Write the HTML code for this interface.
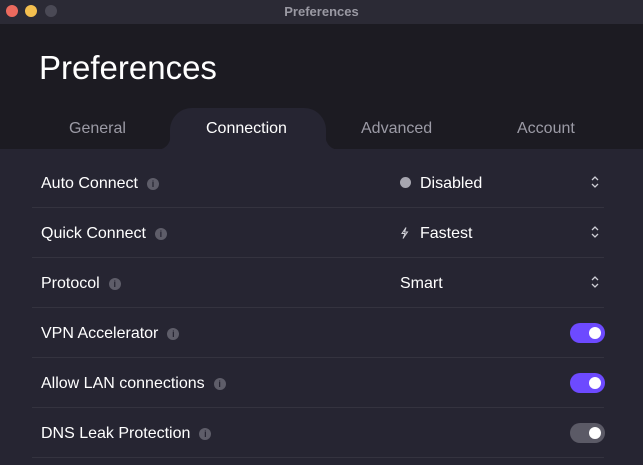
<!DOCTYPE html>
<html><head><style>
*{margin:0;padding:0;box-sizing:border-box}
body{width:643px;height:465px;overflow:hidden;background:#262532;font-family:"Liberation Sans",sans-serif;position:relative;color:#fff}
.tb{position:absolute;left:0;top:0;width:643px;height:24px;background:#2b2a35;}
.tb span{position:absolute;width:12px;height:12px;border-radius:50%;top:5px}
.tb .t{position:absolute;left:0;right:0;top:4px;text-align:center;font-size:13px;font-weight:bold;color:#9a99a3}
.hd{position:absolute;left:0;top:24px;width:643px;height:125px;background:#1c1b22}
.title{position:absolute;left:39px;top:49px;font-size:33px;color:#fff}
.tab{position:absolute;top:120px;font-size:16px;color:#9c9ba6}
.act{position:absolute;left:170px;top:108px;width:156px;height:42px;background:#262532;border-radius:22px 22px 0 0}
.row{position:absolute;left:32px;width:572px;height:50px;border-bottom:1px solid #34333f}
.lb{position:absolute;left:9px;top:17px;font-size:16px;color:#fff}
.i{display:inline-block;width:12px;height:12px;border-radius:50%;background:#5e5d69;color:#262532;font-size:9px;text-align:center;line-height:12px;font-weight:bold;vertical-align:1px;margin-left:9px}
.val{position:absolute;left:368px;top:17px;font-size:16px}
.chev{position:absolute;left:558px;top:17px;width:10px;height:14px}
.tg{position:absolute;left:538px;top:15px;width:35px;height:20px;border-radius:10px;background:#6d4aff}
.tg::after{content:"";position:absolute;right:4px;top:4px;width:12px;height:12px;border-radius:50%;background:#fff}
</style></head><body>
<div class="tb"><span style="left:6px;background:#ec6a5e"></span><span style="left:25px;background:#f4bf4f"></span><span style="left:45px;background:#4a4955"></span><div class="t">Preferences</div></div>
<div class="hd"></div>
<div class="title">Preferences</div>
<div class="act"></div>
<svg style="position:absolute;left:155px;top:134px" width="16" height="16"><path d="M0 16 Q15 16 16 0 L16 16Z" fill="#262532"/></svg>
<svg style="position:absolute;left:325px;top:134px" width="16" height="16"><path d="M16 16 Q1 16 0 0 L0 16Z" fill="#262532"/></svg>
<div class="tab" style="left:69px">General</div>
<div class="tab" style="left:206px;color:#fff">Connection</div>
<div class="tab" style="left:361px">Advanced</div>
<div class="tab" style="left:517px">Account</div>

<div class="row" style="top:158px"><div class="lb">Auto Connect<span class="i">i</span></div>
<div class="val"><span style="display:inline-block;width:11px;height:11px;border-radius:50%;background:#a7a6b0;margin-right:9px;vertical-align:0"></span>Disabled</div>
<svg class="chev" viewBox="0 0 10 14"><path d="M2 5 L5 2 L8 5 M2 9 L5 12 L8 9" stroke="#cfcfd6" stroke-width="1.3" fill="none"/></svg></div>
<div class="row" style="top:208px"><div class="lb">Quick Connect<span class="i">i</span></div>
<div class="val"><svg width="9" height="12" viewBox="0 0 9 12" style="margin-right:11px;vertical-align:-1px"><path d="M6 0.5 L2 6.5 L5 6.5 L3 11.5 L7.5 5 L4.5 5 Z" fill="none" stroke="#cfcfd6" stroke-width="1"/></svg>Fastest</div>
<svg class="chev" viewBox="0 0 10 14"><path d="M2 5 L5 2 L8 5 M2 9 L5 12 L8 9" stroke="#cfcfd6" stroke-width="1.3" fill="none"/></svg></div>
<div class="row" style="top:258px"><div class="lb">Protocol<span class="i">i</span></div>
<div class="val">Smart</div>
<svg class="chev" viewBox="0 0 10 14"><path d="M2 5 L5 2 L8 5 M2 9 L5 12 L8 9" stroke="#cfcfd6" stroke-width="1.3" fill="none"/></svg></div>
<div class="row" style="top:308px"><div class="lb">VPN Accelerator<span class="i">i</span></div><div class="tg"></div></div>
<div class="row" style="top:358px"><div class="lb">Allow LAN connections<span class="i">i</span></div><div class="tg"></div></div>
<div class="row" style="top:408px"><div class="lb">DNS Leak Protection<span class="i">i</span></div><div class="tg" style="background:#5b5a66"></div></div>
</body></html>
